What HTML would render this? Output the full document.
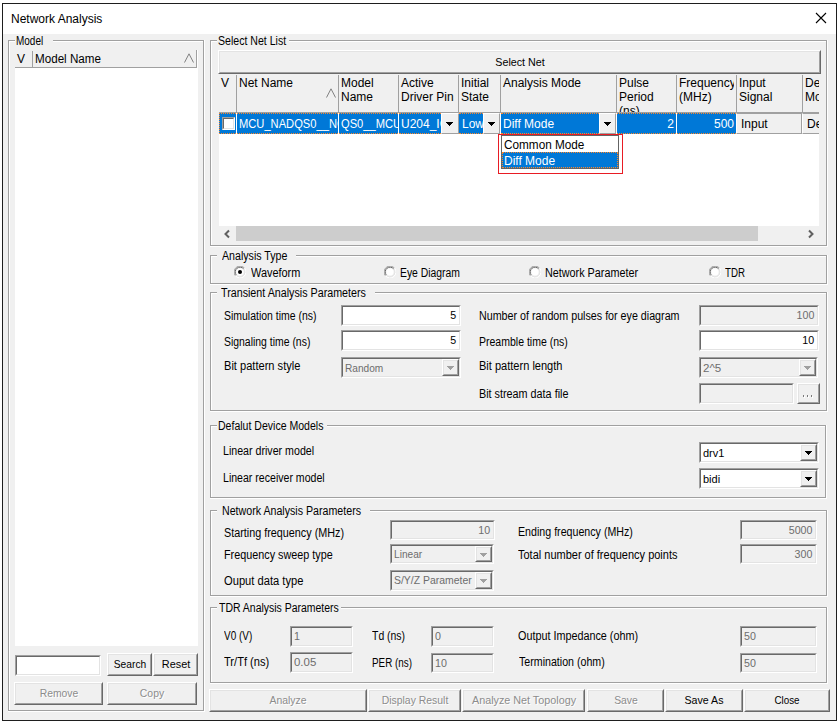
<!DOCTYPE html><html><head><meta charset="utf-8"><style>
html,body{margin:0;padding:0;background:#fff;}
body{width:839px;height:725px;position:relative;overflow:hidden;font-family:"Liberation Sans", sans-serif;}
.a{position:absolute;}
.t{position:absolute;white-space:nowrap;transform-origin:0 0;}
</style></head><body>
<div class="a" style="left:2px;top:3px;width:835px;height:718px;background:#f0f0f0;border:1px solid #1e1e1e;box-sizing:border-box;"></div>
<div class="a" style="left:3px;top:4px;width:833px;height:30px;background:#fff;"></div>
<div class="t" style="left:11px;top:13px;font-size:12px;line-height:12px;color:#000;transform:scaleX(1.0);">Network Analysis</div>
<svg class="a" style="left:815px;top:12px" width="12" height="12" viewBox="0 0 12 12"><path d="M1 1 L11 11 M11 1 L1 11" stroke="#000" stroke-width="1.1"/></svg>
<div class="a" style="left:8px;top:40px;width:196px;height:1px;background:#a0a0a0;"></div>
<div class="a" style="left:8px;top:40px;width:1px;height:671px;background:#a0a0a0;"></div>
<div class="a" style="left:203px;top:40px;width:1px;height:671px;background:#a0a0a0;"></div>
<div class="a" style="left:8px;top:710px;width:196px;height:1px;background:#a0a0a0;"></div>
<div class="a" style="left:9px;top:41px;width:194px;height:1px;background:#fff;"></div>
<div class="a" style="left:9px;top:41px;width:1px;height:669px;background:#fff;"></div>
<div class="a" style="left:204px;top:40px;width:1px;height:672px;background:#fff;"></div>
<div class="a" style="left:8px;top:711px;width:197px;height:1px;background:#fff;"></div>
<div class="a" style="left:15px;top:34px;width:38px;height:10px;background:#f0f0f0;"></div>
<div class="t" style="left:16px;top:35px;font-size:12px;line-height:12px;color:#000;transform:scaleX(0.83);">Model</div>
<div class="a" style="left:15px;top:50px;width:183px;height:596px;background:#fff;"></div>
<div class="a" style="left:15px;top:50px;width:182px;height:18px;background:#f0f0f0;"></div>
<div class="a" style="left:15px;top:67px;width:182px;height:1px;background:#a0a0a0;"></div>
<div class="a" style="left:32px;top:51px;width:1px;height:16px;background:#a0a0a0;"></div>
<div class="a" style="left:196px;top:50px;width:1px;height:17px;background:#a0a0a0;"></div>
<div class="t" style="left:17px;top:53px;font-size:12px;line-height:12px;color:#000;transform:scaleX(1.0);">V</div>
<div class="t" style="left:35px;top:53px;font-size:12px;line-height:12px;color:#000;transform:scaleX(0.97);">Model Name</div>
<svg class="a" style="left:184px;top:53px" width="10" height="10" viewBox="0 0 10 10"><path d="M0.5 9.5 L5 0.8 L9.5 9.5" stroke="#808080" fill="none"/></svg>
<div class="a" style="left:15px;top:655px;width:86px;height:21px;background:#fff;border-top:1px solid #a0a0a0;border-left:1px solid #a0a0a0;border-right:1px solid #fff;border-bottom:1px solid #fff;box-sizing:border-box;"></div>
<div class="a" style="left:16px;top:656px;width:84px;height:19px;border-top:1px solid #696969;border-left:1px solid #696969;border-right:1px solid #e3e3e3;border-bottom:1px solid #e3e3e3;box-sizing:border-box;"></div>
<div class="a" style="left:107px;top:653px;width:45px;height:23px;background:#f0f0f0;border-top:1px solid #fff;border-left:1px solid #fff;border-right:1px solid #696969;border-bottom:1px solid #696969;box-sizing:border-box;"></div>
<div class="a" style="left:108px;top:654px;width:43px;height:21px;border-top:1px solid #e3e3e3;border-left:1px solid #e3e3e3;border-right:1px solid #a0a0a0;border-bottom:1px solid #a0a0a0;box-sizing:border-box;"></div>
<div class="t" style="left:-170.5px;width:600px;text-align:center;top:659px;font-size:11px;line-height:11px;color:#000;transform:scaleX(0.93);transform-origin:50% 0;">Search</div>
<div class="a" style="left:153px;top:653px;width:45px;height:23px;background:#f0f0f0;border-top:1px solid #fff;border-left:1px solid #fff;border-right:1px solid #696969;border-bottom:1px solid #696969;box-sizing:border-box;"></div>
<div class="a" style="left:154px;top:654px;width:43px;height:21px;border-top:1px solid #e3e3e3;border-left:1px solid #e3e3e3;border-right:1px solid #a0a0a0;border-bottom:1px solid #a0a0a0;box-sizing:border-box;"></div>
<div class="t" style="left:-124.5px;width:600px;text-align:center;top:659px;font-size:11px;line-height:11px;color:#000;transform:scaleX(0.99);transform-origin:50% 0;">Reset</div>
<div class="a" style="left:14px;top:682px;width:89px;height:23px;background:#f0f0f0;border-top:1px solid #fff;border-left:1px solid #fff;border-right:1px solid #696969;border-bottom:1px solid #696969;box-sizing:border-box;"></div>
<div class="a" style="left:15px;top:683px;width:87px;height:21px;border-top:1px solid #e3e3e3;border-left:1px solid #e3e3e3;border-right:1px solid #a0a0a0;border-bottom:1px solid #a0a0a0;box-sizing:border-box;"></div>
<div class="t" style="left:-241.5px;width:600px;text-align:center;top:688px;font-size:11px;line-height:11px;color:#8c8c8c;transform:scaleX(0.94);transform-origin:50% 0;text-shadow:1px 1px 0 #fff;">Remove</div>
<div class="a" style="left:107px;top:682px;width:90px;height:23px;background:#f0f0f0;border-top:1px solid #fff;border-left:1px solid #fff;border-right:1px solid #696969;border-bottom:1px solid #696969;box-sizing:border-box;"></div>
<div class="a" style="left:108px;top:683px;width:88px;height:21px;border-top:1px solid #e3e3e3;border-left:1px solid #e3e3e3;border-right:1px solid #a0a0a0;border-bottom:1px solid #a0a0a0;box-sizing:border-box;"></div>
<div class="t" style="left:-148.0px;width:600px;text-align:center;top:688px;font-size:11px;line-height:11px;color:#8c8c8c;transform:scaleX(0.945);transform-origin:50% 0;text-shadow:1px 1px 0 #fff;">Copy</div>
<div class="a" style="left:210px;top:40px;width:617px;height:1px;background:#a0a0a0;"></div>
<div class="a" style="left:210px;top:40px;width:1px;height:206px;background:#a0a0a0;"></div>
<div class="a" style="left:826px;top:40px;width:1px;height:206px;background:#a0a0a0;"></div>
<div class="a" style="left:210px;top:245px;width:617px;height:1px;background:#a0a0a0;"></div>
<div class="a" style="left:211px;top:41px;width:615px;height:1px;background:#fff;"></div>
<div class="a" style="left:211px;top:41px;width:1px;height:204px;background:#fff;"></div>
<div class="a" style="left:827px;top:40px;width:1px;height:207px;background:#fff;"></div>
<div class="a" style="left:210px;top:246px;width:618px;height:1px;background:#fff;"></div>
<div class="a" style="left:217px;top:34px;width:72px;height:10px;background:#f0f0f0;"></div>
<div class="t" style="left:218px;top:35px;font-size:12px;line-height:12px;color:#000;transform:scaleX(0.881);">Select Net List</div>
<div class="a" style="left:219px;top:51px;width:600px;height:175px;background:#fff;"></div>
<div class="a" style="left:218px;top:50px;width:603px;height:24px;background:#f0f0f0;border-top:1px solid #fff;border-left:1px solid #fff;border-right:1px solid #696969;border-bottom:1px solid #696969;box-sizing:border-box;"></div>
<div class="a" style="left:219px;top:51px;width:601px;height:22px;border-top:1px solid #e3e3e3;border-left:1px solid #e3e3e3;border-right:1px solid #a0a0a0;border-bottom:1px solid #a0a0a0;box-sizing:border-box;"></div>
<div class="t" style="left:219.5px;width:600px;text-align:center;top:57px;font-size:11px;line-height:11px;color:#000;transform:scaleX(0.975);transform-origin:50% 0;">Select Net</div>
<div class="a" style="left:219px;top:74px;width:600px;height:39px;background:#f0f0f0;"></div>
<div class="a" style="left:219px;top:112px;width:600px;height:1px;background:#a0a0a0;"></div>
<div class="a" style="left:236px;top:75px;width:1px;height:37px;background:#a0a0a0;"></div>
<div class="a" style="left:338px;top:75px;width:1px;height:37px;background:#a0a0a0;"></div>
<div class="a" style="left:398px;top:75px;width:1px;height:37px;background:#a0a0a0;"></div>
<div class="a" style="left:458px;top:75px;width:1px;height:37px;background:#a0a0a0;"></div>
<div class="a" style="left:500px;top:75px;width:1px;height:37px;background:#a0a0a0;"></div>
<div class="a" style="left:616px;top:75px;width:1px;height:37px;background:#a0a0a0;"></div>
<div class="a" style="left:676px;top:75px;width:1px;height:37px;background:#a0a0a0;"></div>
<div class="a" style="left:736px;top:75px;width:1px;height:37px;background:#a0a0a0;"></div>
<div class="a" style="left:802px;top:75px;width:1px;height:37px;background:#a0a0a0;"></div>
<div class="a" style="left:220px;top:74px;width:14px;height:38px;overflow:hidden">
<div class="t" style="left:1px;top:3px;font-size:12px;line-height:12px;">V</div>
</div>
<div class="a" style="left:237px;top:74px;width:99px;height:38px;overflow:hidden">
<div class="t" style="left:2px;top:3px;font-size:12px;line-height:12px;">Net Name</div>
</div>
<div class="a" style="left:339px;top:74px;width:57px;height:38px;overflow:hidden">
<div class="t" style="left:2px;top:3px;font-size:12px;line-height:12px;">Model</div>
<div class="t" style="left:2px;top:17px;font-size:12px;line-height:12px;">Name</div>
</div>
<div class="a" style="left:399px;top:74px;width:57px;height:38px;overflow:hidden">
<div class="t" style="left:2px;top:3px;font-size:12px;line-height:12px;">Active</div>
<div class="t" style="left:2px;top:17px;font-size:12px;line-height:12px;">Driver Pin</div>
</div>
<div class="a" style="left:459px;top:74px;width:39px;height:38px;overflow:hidden">
<div class="t" style="left:2px;top:3px;font-size:12px;line-height:12px;">Initial</div>
<div class="t" style="left:2px;top:17px;font-size:12px;line-height:12px;">State</div>
</div>
<div class="a" style="left:501px;top:74px;width:113px;height:38px;overflow:hidden">
<div class="t" style="left:2px;top:3px;font-size:12px;line-height:12px;">Analysis Mode</div>
</div>
<div class="a" style="left:617px;top:74px;width:57px;height:38px;overflow:hidden">
<div class="t" style="left:2px;top:3px;font-size:12px;line-height:12px;">Pulse</div>
<div class="t" style="left:2px;top:17px;font-size:12px;line-height:12px;">Period</div>
<div class="t" style="left:2px;top:31px;font-size:12px;line-height:12px;">(ns)</div>
</div>
<div class="a" style="left:677px;top:74px;width:57px;height:38px;overflow:hidden">
<div class="t" style="left:2px;top:3px;font-size:12px;line-height:12px;">Frequency</div>
<div class="t" style="left:2px;top:17px;font-size:12px;line-height:12px;">(MHz)</div>
</div>
<div class="a" style="left:737px;top:74px;width:63px;height:38px;overflow:hidden">
<div class="t" style="left:2px;top:3px;font-size:12px;line-height:12px;">Input</div>
<div class="t" style="left:2px;top:17px;font-size:12px;line-height:12px;">Signal</div>
</div>
<div class="a" style="left:803px;top:74px;width:16px;height:38px;overflow:hidden">
<div class="t" style="left:2px;top:3px;font-size:12px;line-height:12px;">De</div>
<div class="t" style="left:2px;top:17px;font-size:12px;line-height:12px;">Mo</div>
</div>
<svg class="a" style="left:326px;top:88px" width="10" height="10" viewBox="0 0 10 10"><path d="M0.5 9.5 L5 0.8 L9.5 9.5" stroke="#808080" fill="none"/></svg>
<div class="a" style="left:219px;top:113px;width:600px;height:21px;background:#fff;"></div>
<div class="a" style="left:219px;top:113px;width:17px;height:21px;background:#0078d7;border-top:1px dotted #ff8728;border-bottom:1px dotted #ff8728;box-sizing:border-box;"></div>
<div class="a" style="left:219px;top:113px;width:1px;height:21px;border-left:1px dotted #ff8728;"></div>
<div class="a" style="left:222px;top:117px;width:13px;height:13px;background:#fff;border-top:1px solid #a0a0a0;border-left:1px solid #a0a0a0;border-right:1px solid #fff;border-bottom:1px solid #fff;box-sizing:border-box;"></div>
<div class="a" style="left:223px;top:118px;width:11px;height:11px;border-top:1px solid #696969;border-left:1px solid #696969;border-right:1px solid #e3e3e3;border-bottom:1px solid #e3e3e3;box-sizing:border-box;"></div>
<div class="a" style="left:237px;top:113px;width:101px;height:21px;background:#0078d7;border-top:1px dotted #ff8728;border-bottom:1px dotted #ff8728;box-sizing:border-box;"></div>
<div class="a" style="left:237px;top:113px;width:101px;height:21px;overflow:hidden">
<div class="t" style="left:2px;top:5px;font-size:12px;line-height:12px;color:#fff;transform:scaleX(0.93)">MCU_NADQS0__NCU</div>
</div>
<div class="a" style="left:339px;top:113px;width:59px;height:21px;background:#0078d7;border-top:1px dotted #ff8728;border-bottom:1px dotted #ff8728;box-sizing:border-box;"></div>
<div class="a" style="left:339px;top:113px;width:59px;height:21px;overflow:hidden">
<div class="t" style="left:2px;top:5px;font-size:12px;line-height:12px;color:#fff;transform:scaleX(0.93)">QS0__MCU_NA</div>
</div>
<div class="a" style="left:399px;top:113px;width:42px;height:21px;background:#0078d7;border-top:1px dotted #ff8728;border-bottom:1px dotted #ff8728;box-sizing:border-box;"></div>
<div class="a" style="left:399px;top:113px;width:42px;height:21px;overflow:hidden">
<div class="t" style="left:2px;top:5px;font-size:12px;line-height:12px;color:#fff;transform:scaleX(1.0)">U204_IO</div>
</div>
<div class="a" style="left:459px;top:113px;width:24px;height:21px;background:#0078d7;border-top:1px dotted #ff8728;border-bottom:1px dotted #ff8728;box-sizing:border-box;"></div>
<div class="a" style="left:459px;top:113px;width:24px;height:21px;overflow:hidden">
<div class="t" style="left:3px;top:5px;font-size:12px;line-height:12px;color:#fff;transform:scaleX(1.0)">Low</div>
</div>
<div class="a" style="left:501px;top:113px;width:98px;height:21px;background:#0078d7;border-top:1px dotted #ff8728;border-bottom:1px dotted #ff8728;box-sizing:border-box;"></div>
<div class="a" style="left:501px;top:113px;width:98px;height:21px;overflow:hidden">
<div class="t" style="left:2px;top:5px;font-size:12px;line-height:12px;color:#fff;transform:scaleX(1.0)">Diff Mode</div>
</div>
<div class="a" style="left:617px;top:113px;width:59px;height:21px;background:#0078d7;border-top:1px dotted #ff8728;border-bottom:1px dotted #ff8728;box-sizing:border-box;"></div>
<div class="a" style="left:617px;top:113px;width:59px;height:21px;overflow:hidden">
<div class="t" style="right:2px;top:5px;font-size:12px;line-height:12px;color:#fff">2</div>
</div>
<div class="a" style="left:677px;top:113px;width:59px;height:21px;background:#0078d7;border-top:1px dotted #ff8728;border-bottom:1px dotted #ff8728;box-sizing:border-box;"></div>
<div class="a" style="left:677px;top:113px;width:59px;height:21px;overflow:hidden">
<div class="t" style="right:2px;top:5px;font-size:12px;line-height:12px;color:#fff">500</div>
</div>
<div class="a" style="left:441px;top:113px;width:18px;height:21px;background:#f0f0f0;border-top:1px solid #fff;border-left:1px solid #fff;border-right:1px solid #a0a0a0;border-bottom:1px solid #a0a0a0;box-sizing:border-box;"></div>
<div class="a" style="left:446px;top:122px;width:7px;height:1px;background:#000;"></div>
<div class="a" style="left:447px;top:123px;width:5px;height:1px;background:#000;"></div>
<div class="a" style="left:448px;top:124px;width:3px;height:1px;background:#000;"></div>
<div class="a" style="left:449px;top:125px;width:1px;height:1px;background:#000;"></div>
<div class="a" style="left:483px;top:113px;width:17px;height:21px;background:#f0f0f0;border-top:1px solid #fff;border-left:1px solid #fff;border-right:1px solid #a0a0a0;border-bottom:1px solid #a0a0a0;box-sizing:border-box;"></div>
<div class="a" style="left:488px;top:122px;width:7px;height:1px;background:#000;"></div>
<div class="a" style="left:489px;top:123px;width:5px;height:1px;background:#000;"></div>
<div class="a" style="left:490px;top:124px;width:3px;height:1px;background:#000;"></div>
<div class="a" style="left:491px;top:125px;width:1px;height:1px;background:#000;"></div>
<div class="a" style="left:599px;top:113px;width:17px;height:21px;background:#f0f0f0;border-top:1px solid #fff;border-left:1px solid #fff;border-right:1px solid #a0a0a0;border-bottom:1px solid #a0a0a0;box-sizing:border-box;"></div>
<div class="a" style="left:604px;top:122px;width:7px;height:1px;background:#000;"></div>
<div class="a" style="left:605px;top:123px;width:5px;height:1px;background:#000;"></div>
<div class="a" style="left:606px;top:124px;width:3px;height:1px;background:#000;"></div>
<div class="a" style="left:607px;top:125px;width:1px;height:1px;background:#000;"></div>
<div class="a" style="left:736px;top:113px;width:66px;height:21px;background:#f0f0f0;border-top:1px solid #a0a0a0;border-left:1px solid #fff;border-right:1px solid #a0a0a0;border-bottom:1px solid #a0a0a0;box-sizing:border-box;"></div>
<div class="t" style="left:741px;top:118px;font-size:12px;line-height:12px;color:#000;transform:scaleX(1.0);">Input</div>
<div class="a" style="left:802px;top:113px;width:17px;height:21px;background:#f0f0f0;border-top:1px solid #a0a0a0;border-left:1px solid #fff;border-bottom:1px solid #a0a0a0;box-sizing:border-box;"></div>
<div class="a" style="left:802px;top:113px;width:17px;height:21px;overflow:hidden"><div class="t" style="left:5px;top:5px;font-size:12px;line-height:12px;">De</div></div>
<div class="a" style="left:498px;top:134px;width:125px;height:40px;border:1px solid #e81c24;box-sizing:border-box;"></div>
<div class="a" style="left:501px;top:135px;width:118px;height:34px;background:#fff;border:1px solid #646464;box-sizing:border-box;"></div>
<div class="a" style="left:502px;top:152px;width:116px;height:16px;background:#0078d7;border:1px dotted #ff8728;box-sizing:border-box;"></div>
<div class="t" style="left:504px;top:139px;font-size:12px;line-height:12px;color:#000;transform:scaleX(0.98);">Common Mode</div>
<div class="t" style="left:504px;top:155px;font-size:12px;line-height:12px;color:#fff;transform:scaleX(1.0);">Diff Mode</div>
<div class="a" style="left:219px;top:226px;width:600px;height:15px;background:#f0f0f0;"></div>
<div class="a" style="left:236px;top:226px;width:522px;height:15px;background:#cdcdcd;"></div>
<svg class="a" style="left:223px;top:229px" width="9" height="10" viewBox="0 0 9 10"><path d="M6 1.5 L2.5 5 L6 8.5" stroke="#606060" stroke-width="2" fill="none"/></svg>
<svg class="a" style="left:806px;top:229px" width="9" height="10" viewBox="0 0 9 10"><path d="M3 1.5 L6.5 5 L3 8.5" stroke="#606060" stroke-width="2" fill="none"/></svg>
<div class="a" style="left:210px;top:255px;width:617px;height:1px;background:#a0a0a0;"></div>
<div class="a" style="left:210px;top:255px;width:1px;height:29px;background:#a0a0a0;"></div>
<div class="a" style="left:826px;top:255px;width:1px;height:29px;background:#a0a0a0;"></div>
<div class="a" style="left:210px;top:283px;width:617px;height:1px;background:#a0a0a0;"></div>
<div class="a" style="left:211px;top:256px;width:615px;height:1px;background:#fff;"></div>
<div class="a" style="left:211px;top:256px;width:1px;height:27px;background:#fff;"></div>
<div class="a" style="left:827px;top:255px;width:1px;height:30px;background:#fff;"></div>
<div class="a" style="left:210px;top:284px;width:618px;height:1px;background:#fff;"></div>
<div class="a" style="left:217px;top:249px;width:79px;height:10px;background:#f0f0f0;"></div>
<div class="t" style="left:222px;top:250px;font-size:12px;line-height:12px;color:#000;transform:scaleX(0.886);">Analysis Type</div>
<svg class="a" style="left:234px;top:266px" width="12" height="12" viewBox="0 0 12 12">
<path d="M10.5 2.1 A5.5 5.5 0 0 0 1.5 9.9" stroke="#a0a0a0" fill="none"/>
<path d="M9.7 2.9 A4.5 4.5 0 0 0 2.3 9.1" stroke="#696969" fill="none"/>
<path d="M1.5 9.9 A5.5 5.5 0 0 0 10.5 2.1" stroke="#fff" fill="none"/>
<path d="M2.3 9.1 A4.5 4.5 0 0 0 9.7 2.9" stroke="#e3e3e3" fill="none"/>
<circle cx="6" cy="6" r="3.5" fill="#fff"/>
<circle cx="6" cy="6" r="2" fill="#000"/>
</svg>
<div class="t" style="left:251px;top:267px;font-size:12px;line-height:12px;color:#000;transform:scaleX(0.91);">Waveform</div>
<svg class="a" style="left:384px;top:266px" width="12" height="12" viewBox="0 0 12 12">
<path d="M10.5 2.1 A5.5 5.5 0 0 0 1.5 9.9" stroke="#a0a0a0" fill="none"/>
<path d="M9.7 2.9 A4.5 4.5 0 0 0 2.3 9.1" stroke="#696969" fill="none"/>
<path d="M1.5 9.9 A5.5 5.5 0 0 0 10.5 2.1" stroke="#fff" fill="none"/>
<path d="M2.3 9.1 A4.5 4.5 0 0 0 9.7 2.9" stroke="#e3e3e3" fill="none"/>
<circle cx="6" cy="6" r="3.5" fill="#fff"/>

</svg>
<div class="t" style="left:400px;top:267px;font-size:12px;line-height:12px;color:#000;transform:scaleX(0.865);">Eye Diagram</div>
<svg class="a" style="left:529px;top:266px" width="12" height="12" viewBox="0 0 12 12">
<path d="M10.5 2.1 A5.5 5.5 0 0 0 1.5 9.9" stroke="#a0a0a0" fill="none"/>
<path d="M9.7 2.9 A4.5 4.5 0 0 0 2.3 9.1" stroke="#696969" fill="none"/>
<path d="M1.5 9.9 A5.5 5.5 0 0 0 10.5 2.1" stroke="#fff" fill="none"/>
<path d="M2.3 9.1 A4.5 4.5 0 0 0 9.7 2.9" stroke="#e3e3e3" fill="none"/>
<circle cx="6" cy="6" r="3.5" fill="#fff"/>

</svg>
<div class="t" style="left:545px;top:267px;font-size:12px;line-height:12px;color:#000;transform:scaleX(0.9);">Network Parameter</div>
<svg class="a" style="left:709px;top:266px" width="12" height="12" viewBox="0 0 12 12">
<path d="M10.5 2.1 A5.5 5.5 0 0 0 1.5 9.9" stroke="#a0a0a0" fill="none"/>
<path d="M9.7 2.9 A4.5 4.5 0 0 0 2.3 9.1" stroke="#696969" fill="none"/>
<path d="M1.5 9.9 A5.5 5.5 0 0 0 10.5 2.1" stroke="#fff" fill="none"/>
<path d="M2.3 9.1 A4.5 4.5 0 0 0 9.7 2.9" stroke="#e3e3e3" fill="none"/>
<circle cx="6" cy="6" r="3.5" fill="#fff"/>

</svg>
<div class="t" style="left:725px;top:267px;font-size:12px;line-height:12px;color:#000;transform:scaleX(0.81);">TDR</div>
<div class="a" style="left:210px;top:292px;width:617px;height:1px;background:#a0a0a0;"></div>
<div class="a" style="left:210px;top:292px;width:1px;height:119px;background:#a0a0a0;"></div>
<div class="a" style="left:826px;top:292px;width:1px;height:119px;background:#a0a0a0;"></div>
<div class="a" style="left:210px;top:410px;width:617px;height:1px;background:#a0a0a0;"></div>
<div class="a" style="left:211px;top:293px;width:615px;height:1px;background:#fff;"></div>
<div class="a" style="left:211px;top:293px;width:1px;height:117px;background:#fff;"></div>
<div class="a" style="left:827px;top:292px;width:1px;height:120px;background:#fff;"></div>
<div class="a" style="left:210px;top:411px;width:618px;height:1px;background:#fff;"></div>
<div class="a" style="left:217px;top:286px;width:158px;height:10px;background:#f0f0f0;"></div>
<div class="t" style="left:221px;top:287px;font-size:12px;line-height:12px;color:#000;transform:scaleX(0.893);">Transient Analysis Parameters</div>
<div class="t" style="left:224px;top:310px;font-size:12px;line-height:12px;color:#000;transform:scaleX(0.872);">Simulation time (ns)</div>
<div class="t" style="left:224px;top:336px;font-size:12px;line-height:12px;color:#000;transform:scaleX(0.869);">Signaling time (ns)</div>
<div class="t" style="left:224px;top:360px;font-size:12px;line-height:12px;color:#000;transform:scaleX(0.924);">Bit pattern style</div>
<div class="a" style="left:341px;top:305px;width:120px;height:21px;background:#fff;border-top:1px solid #a0a0a0;border-left:1px solid #a0a0a0;border-right:1px solid #fff;border-bottom:1px solid #fff;box-sizing:border-box;"></div>
<div class="a" style="left:342px;top:306px;width:118px;height:19px;border-top:1px solid #696969;border-left:1px solid #696969;border-right:1px solid #e3e3e3;border-bottom:1px solid #e3e3e3;box-sizing:border-box;"></div>
<div class="t" style="right:382.5px;top:310px;font-size:11px;line-height:11px;color:#000;transform:scaleX(0.97);transform-origin:100% 0;">5</div>
<div class="a" style="left:341px;top:330px;width:120px;height:21px;background:#fff;border-top:1px solid #a0a0a0;border-left:1px solid #a0a0a0;border-right:1px solid #fff;border-bottom:1px solid #fff;box-sizing:border-box;"></div>
<div class="a" style="left:342px;top:331px;width:118px;height:19px;border-top:1px solid #696969;border-left:1px solid #696969;border-right:1px solid #e3e3e3;border-bottom:1px solid #e3e3e3;box-sizing:border-box;"></div>
<div class="t" style="right:382.5px;top:335px;font-size:11px;line-height:11px;color:#000;transform:scaleX(0.97);transform-origin:100% 0;">5</div>
<div class="a" style="left:341px;top:357px;width:120px;height:21px;background:#f0f0f0;border-top:1px solid #a0a0a0;border-left:1px solid #a0a0a0;border-right:1px solid #fff;border-bottom:1px solid #fff;box-sizing:border-box;"></div>
<div class="a" style="left:342px;top:358px;width:118px;height:19px;border-top:1px solid #696969;border-left:1px solid #696969;border-right:1px solid #e3e3e3;border-bottom:1px solid #e3e3e3;box-sizing:border-box;"></div>
<div class="a" style="left:442px;top:359px;width:17px;height:17px;background:#f0f0f0;border-top:1px solid #fff;border-left:1px solid #fff;border-right:1px solid #696969;border-bottom:1px solid #696969;box-sizing:border-box;"></div>
<div class="a" style="left:443px;top:360px;width:15px;height:15px;border-top:1px solid #e3e3e3;border-left:1px solid #e3e3e3;border-right:1px solid #a0a0a0;border-bottom:1px solid #a0a0a0;box-sizing:border-box;"></div>
<div class="a" style="left:447px;top:366px;width:7px;height:1px;background:#a0a0a0;"></div>
<div class="a" style="left:448px;top:367px;width:5px;height:1px;background:#a0a0a0;"></div>
<div class="a" style="left:449px;top:368px;width:3px;height:1px;background:#a0a0a0;"></div>
<div class="a" style="left:450px;top:369px;width:1px;height:1px;background:#a0a0a0;"></div>
<div class="t" style="left:345px;top:363px;font-size:11px;line-height:11px;color:#6d6d6d;transform:scaleX(0.92);">Random</div>
<div class="t" style="left:479px;top:310px;font-size:12px;line-height:12px;color:#000;transform:scaleX(0.892);">Number of random pulses for eye diagram</div>
<div class="t" style="left:479px;top:336px;font-size:12px;line-height:12px;color:#000;transform:scaleX(0.876);">Preamble time (ns)</div>
<div class="t" style="left:479px;top:360px;font-size:12px;line-height:12px;color:#000;transform:scaleX(0.92);">Bit pattern length</div>
<div class="t" style="left:479px;top:388px;font-size:12px;line-height:12px;color:#000;transform:scaleX(0.9);">Bit stream data file</div>
<div class="a" style="left:699px;top:305px;width:120px;height:21px;background:#f0f0f0;border-top:1px solid #a0a0a0;border-left:1px solid #a0a0a0;border-right:1px solid #fff;border-bottom:1px solid #fff;box-sizing:border-box;"></div>
<div class="a" style="left:700px;top:306px;width:118px;height:19px;border-top:1px solid #696969;border-left:1px solid #696969;border-right:1px solid #e3e3e3;border-bottom:1px solid #e3e3e3;box-sizing:border-box;"></div>
<div class="t" style="right:24.5px;top:310px;font-size:11px;line-height:11px;color:#6d6d6d;transform:scaleX(0.97);transform-origin:100% 0;">100</div>
<div class="a" style="left:699px;top:330px;width:120px;height:21px;background:#fff;border-top:1px solid #a0a0a0;border-left:1px solid #a0a0a0;border-right:1px solid #fff;border-bottom:1px solid #fff;box-sizing:border-box;"></div>
<div class="a" style="left:700px;top:331px;width:118px;height:19px;border-top:1px solid #696969;border-left:1px solid #696969;border-right:1px solid #e3e3e3;border-bottom:1px solid #e3e3e3;box-sizing:border-box;"></div>
<div class="t" style="right:24.5px;top:335px;font-size:11px;line-height:11px;color:#000;transform:scaleX(0.97);transform-origin:100% 0;">10</div>
<div class="a" style="left:699px;top:357px;width:119px;height:21px;background:#f0f0f0;border-top:1px solid #a0a0a0;border-left:1px solid #a0a0a0;border-right:1px solid #fff;border-bottom:1px solid #fff;box-sizing:border-box;"></div>
<div class="a" style="left:700px;top:358px;width:117px;height:19px;border-top:1px solid #696969;border-left:1px solid #696969;border-right:1px solid #e3e3e3;border-bottom:1px solid #e3e3e3;box-sizing:border-box;"></div>
<div class="a" style="left:799px;top:359px;width:17px;height:17px;background:#f0f0f0;border-top:1px solid #fff;border-left:1px solid #fff;border-right:1px solid #696969;border-bottom:1px solid #696969;box-sizing:border-box;"></div>
<div class="a" style="left:800px;top:360px;width:15px;height:15px;border-top:1px solid #e3e3e3;border-left:1px solid #e3e3e3;border-right:1px solid #a0a0a0;border-bottom:1px solid #a0a0a0;box-sizing:border-box;"></div>
<div class="a" style="left:804px;top:366px;width:7px;height:1px;background:#a0a0a0;"></div>
<div class="a" style="left:805px;top:367px;width:5px;height:1px;background:#a0a0a0;"></div>
<div class="a" style="left:806px;top:368px;width:3px;height:1px;background:#a0a0a0;"></div>
<div class="a" style="left:807px;top:369px;width:1px;height:1px;background:#a0a0a0;"></div>
<div class="t" style="left:703px;top:363px;font-size:11px;line-height:11px;color:#6d6d6d;transform:scaleX(1.05);">2^5</div>
<div class="a" style="left:699px;top:383px;width:95px;height:21px;background:#f0f0f0;border-top:1px solid #a0a0a0;border-left:1px solid #a0a0a0;border-right:1px solid #fff;border-bottom:1px solid #fff;box-sizing:border-box;"></div>
<div class="a" style="left:700px;top:384px;width:93px;height:19px;border-top:1px solid #696969;border-left:1px solid #696969;border-right:1px solid #e3e3e3;border-bottom:1px solid #e3e3e3;box-sizing:border-box;"></div>
<div class="a" style="left:797px;top:383px;width:23px;height:21px;background:#f0f0f0;border-top:1px solid #fff;border-left:1px solid #fff;border-right:1px solid #696969;border-bottom:1px solid #696969;box-sizing:border-box;"></div>
<div class="a" style="left:798px;top:384px;width:21px;height:19px;border-top:1px solid #e3e3e3;border-left:1px solid #e3e3e3;border-right:1px solid #a0a0a0;border-bottom:1px solid #a0a0a0;box-sizing:border-box;"></div>
<div class="a" style="left:804px;top:396px;width:1px;height:2px;background:#fff;"></div>
<div class="a" style="left:803px;top:395px;width:1px;height:2px;background:#7a7a7a;"></div>
<div class="a" style="left:808px;top:396px;width:1px;height:2px;background:#fff;"></div>
<div class="a" style="left:807px;top:395px;width:1px;height:2px;background:#7a7a7a;"></div>
<div class="a" style="left:812px;top:396px;width:1px;height:2px;background:#fff;"></div>
<div class="a" style="left:811px;top:395px;width:1px;height:2px;background:#7a7a7a;"></div>
<div class="a" style="left:210px;top:425px;width:616px;height:1px;background:#a0a0a0;"></div>
<div class="a" style="left:210px;top:425px;width:1px;height:73px;background:#a0a0a0;"></div>
<div class="a" style="left:825px;top:425px;width:1px;height:73px;background:#a0a0a0;"></div>
<div class="a" style="left:210px;top:497px;width:616px;height:1px;background:#a0a0a0;"></div>
<div class="a" style="left:211px;top:426px;width:614px;height:1px;background:#fff;"></div>
<div class="a" style="left:211px;top:426px;width:1px;height:71px;background:#fff;"></div>
<div class="a" style="left:826px;top:425px;width:1px;height:74px;background:#fff;"></div>
<div class="a" style="left:210px;top:498px;width:617px;height:1px;background:#fff;"></div>
<div class="a" style="left:217px;top:419px;width:110px;height:10px;background:#f0f0f0;"></div>
<div class="t" style="left:218px;top:420px;font-size:12px;line-height:12px;color:#000;transform:scaleX(0.878);">Defalut Device Models</div>
<div class="t" style="left:223px;top:445px;font-size:12px;line-height:12px;color:#000;transform:scaleX(0.887);">Linear driver model</div>
<div class="t" style="left:223px;top:472px;font-size:12px;line-height:12px;color:#000;transform:scaleX(0.881);">Linear receiver model</div>
<div class="a" style="left:699px;top:442px;width:120px;height:21px;background:#fff;border-top:1px solid #a0a0a0;border-left:1px solid #a0a0a0;border-right:1px solid #fff;border-bottom:1px solid #fff;box-sizing:border-box;"></div>
<div class="a" style="left:700px;top:443px;width:118px;height:19px;border-top:1px solid #696969;border-left:1px solid #696969;border-right:1px solid #e3e3e3;border-bottom:1px solid #e3e3e3;box-sizing:border-box;"></div>
<div class="a" style="left:800px;top:444px;width:17px;height:17px;background:#f0f0f0;border-top:1px solid #fff;border-left:1px solid #fff;border-right:1px solid #696969;border-bottom:1px solid #696969;box-sizing:border-box;"></div>
<div class="a" style="left:801px;top:445px;width:15px;height:15px;border-top:1px solid #e3e3e3;border-left:1px solid #e3e3e3;border-right:1px solid #a0a0a0;border-bottom:1px solid #a0a0a0;box-sizing:border-box;"></div>
<div class="a" style="left:805px;top:451px;width:7px;height:1px;background:#000;"></div>
<div class="a" style="left:806px;top:452px;width:5px;height:1px;background:#000;"></div>
<div class="a" style="left:807px;top:453px;width:3px;height:1px;background:#000;"></div>
<div class="a" style="left:808px;top:454px;width:1px;height:1px;background:#000;"></div>
<div class="t" style="left:703px;top:448px;font-size:11px;line-height:11px;color:#000;transform:scaleX(1.0);">drv1</div>
<div class="a" style="left:699px;top:468px;width:120px;height:21px;background:#fff;border-top:1px solid #a0a0a0;border-left:1px solid #a0a0a0;border-right:1px solid #fff;border-bottom:1px solid #fff;box-sizing:border-box;"></div>
<div class="a" style="left:700px;top:469px;width:118px;height:19px;border-top:1px solid #696969;border-left:1px solid #696969;border-right:1px solid #e3e3e3;border-bottom:1px solid #e3e3e3;box-sizing:border-box;"></div>
<div class="a" style="left:800px;top:470px;width:17px;height:17px;background:#f0f0f0;border-top:1px solid #fff;border-left:1px solid #fff;border-right:1px solid #696969;border-bottom:1px solid #696969;box-sizing:border-box;"></div>
<div class="a" style="left:801px;top:471px;width:15px;height:15px;border-top:1px solid #e3e3e3;border-left:1px solid #e3e3e3;border-right:1px solid #a0a0a0;border-bottom:1px solid #a0a0a0;box-sizing:border-box;"></div>
<div class="a" style="left:805px;top:477px;width:7px;height:1px;background:#000;"></div>
<div class="a" style="left:806px;top:478px;width:5px;height:1px;background:#000;"></div>
<div class="a" style="left:807px;top:479px;width:3px;height:1px;background:#000;"></div>
<div class="a" style="left:808px;top:480px;width:1px;height:1px;background:#000;"></div>
<div class="t" style="left:703px;top:474px;font-size:11px;line-height:11px;color:#000;transform:scaleX(1.0);">bidi</div>
<div class="a" style="left:210px;top:510px;width:617px;height:1px;background:#a0a0a0;"></div>
<div class="a" style="left:210px;top:510px;width:1px;height:86px;background:#a0a0a0;"></div>
<div class="a" style="left:826px;top:510px;width:1px;height:86px;background:#a0a0a0;"></div>
<div class="a" style="left:210px;top:595px;width:617px;height:1px;background:#a0a0a0;"></div>
<div class="a" style="left:211px;top:511px;width:615px;height:1px;background:#fff;"></div>
<div class="a" style="left:211px;top:511px;width:1px;height:84px;background:#fff;"></div>
<div class="a" style="left:827px;top:510px;width:1px;height:87px;background:#fff;"></div>
<div class="a" style="left:210px;top:596px;width:618px;height:1px;background:#fff;"></div>
<div class="a" style="left:217px;top:504px;width:153px;height:10px;background:#f0f0f0;"></div>
<div class="t" style="left:222px;top:505px;font-size:12px;line-height:12px;color:#000;transform:scaleX(0.887);">Network Analysis Parameters</div>
<div class="t" style="left:224px;top:527px;font-size:12px;line-height:12px;color:#000;transform:scaleX(0.9);">Starting frequency (MHz)</div>
<div class="t" style="left:224px;top:549px;font-size:12px;line-height:12px;color:#000;transform:scaleX(0.9);">Frequency sweep type</div>
<div class="t" style="left:224px;top:575px;font-size:12px;line-height:12px;color:#000;transform:scaleX(0.93);">Ouput data type</div>
<div class="a" style="left:390px;top:520px;width:105px;height:20px;background:#f0f0f0;border-top:1px solid #a0a0a0;border-left:1px solid #a0a0a0;border-right:1px solid #fff;border-bottom:1px solid #fff;box-sizing:border-box;"></div>
<div class="a" style="left:391px;top:521px;width:103px;height:18px;border-top:1px solid #696969;border-left:1px solid #696969;border-right:1px solid #e3e3e3;border-bottom:1px solid #e3e3e3;box-sizing:border-box;"></div>
<div class="t" style="right:348.5px;top:525px;font-size:11px;line-height:11px;color:#6d6d6d;transform:scaleX(0.97);transform-origin:100% 0;">10</div>
<div class="a" style="left:390px;top:544px;width:104px;height:20px;background:#f0f0f0;border-top:1px solid #a0a0a0;border-left:1px solid #a0a0a0;border-right:1px solid #fff;border-bottom:1px solid #fff;box-sizing:border-box;"></div>
<div class="a" style="left:391px;top:545px;width:102px;height:18px;border-top:1px solid #696969;border-left:1px solid #696969;border-right:1px solid #e3e3e3;border-bottom:1px solid #e3e3e3;box-sizing:border-box;"></div>
<div class="a" style="left:475px;top:546px;width:17px;height:16px;background:#f0f0f0;border-top:1px solid #fff;border-left:1px solid #fff;border-right:1px solid #696969;border-bottom:1px solid #696969;box-sizing:border-box;"></div>
<div class="a" style="left:476px;top:547px;width:15px;height:14px;border-top:1px solid #e3e3e3;border-left:1px solid #e3e3e3;border-right:1px solid #a0a0a0;border-bottom:1px solid #a0a0a0;box-sizing:border-box;"></div>
<div class="a" style="left:480px;top:553px;width:7px;height:1px;background:#a0a0a0;"></div>
<div class="a" style="left:481px;top:554px;width:5px;height:1px;background:#a0a0a0;"></div>
<div class="a" style="left:482px;top:555px;width:3px;height:1px;background:#a0a0a0;"></div>
<div class="a" style="left:483px;top:556px;width:1px;height:1px;background:#a0a0a0;"></div>
<div class="t" style="left:394px;top:549px;font-size:11px;line-height:11px;color:#6d6d6d;transform:scaleX(0.92);">Linear</div>
<div class="a" style="left:390px;top:570px;width:104px;height:21px;background:#f0f0f0;border-top:1px solid #a0a0a0;border-left:1px solid #a0a0a0;border-right:1px solid #fff;border-bottom:1px solid #fff;box-sizing:border-box;"></div>
<div class="a" style="left:391px;top:571px;width:102px;height:19px;border-top:1px solid #696969;border-left:1px solid #696969;border-right:1px solid #e3e3e3;border-bottom:1px solid #e3e3e3;box-sizing:border-box;"></div>
<div class="a" style="left:475px;top:572px;width:17px;height:17px;background:#f0f0f0;border-top:1px solid #fff;border-left:1px solid #fff;border-right:1px solid #696969;border-bottom:1px solid #696969;box-sizing:border-box;"></div>
<div class="a" style="left:476px;top:573px;width:15px;height:15px;border-top:1px solid #e3e3e3;border-left:1px solid #e3e3e3;border-right:1px solid #a0a0a0;border-bottom:1px solid #a0a0a0;box-sizing:border-box;"></div>
<div class="a" style="left:480px;top:579px;width:7px;height:1px;background:#a0a0a0;"></div>
<div class="a" style="left:481px;top:580px;width:5px;height:1px;background:#a0a0a0;"></div>
<div class="a" style="left:482px;top:581px;width:3px;height:1px;background:#a0a0a0;"></div>
<div class="a" style="left:483px;top:582px;width:1px;height:1px;background:#a0a0a0;"></div>
<div class="t" style="left:394px;top:575px;font-size:11px;line-height:11px;color:#6d6d6d;transform:scaleX(0.95);">S/Y/Z Parameter</div>
<div class="t" style="left:518px;top:526px;font-size:12px;line-height:12px;color:#000;transform:scaleX(0.888);">Ending frequency (MHz)</div>
<div class="t" style="left:518px;top:549px;font-size:12px;line-height:12px;color:#000;transform:scaleX(0.916);">Total number of frequency points</div>
<div class="a" style="left:740px;top:520px;width:77px;height:20px;background:#f0f0f0;border-top:1px solid #a0a0a0;border-left:1px solid #a0a0a0;border-right:1px solid #fff;border-bottom:1px solid #fff;box-sizing:border-box;"></div>
<div class="a" style="left:741px;top:521px;width:75px;height:18px;border-top:1px solid #696969;border-left:1px solid #696969;border-right:1px solid #e3e3e3;border-bottom:1px solid #e3e3e3;box-sizing:border-box;"></div>
<div class="t" style="right:26.5px;top:525px;font-size:11px;line-height:11px;color:#6d6d6d;transform:scaleX(0.97);transform-origin:100% 0;">5000</div>
<div class="a" style="left:740px;top:544px;width:77px;height:20px;background:#f0f0f0;border-top:1px solid #a0a0a0;border-left:1px solid #a0a0a0;border-right:1px solid #fff;border-bottom:1px solid #fff;box-sizing:border-box;"></div>
<div class="a" style="left:741px;top:545px;width:75px;height:18px;border-top:1px solid #696969;border-left:1px solid #696969;border-right:1px solid #e3e3e3;border-bottom:1px solid #e3e3e3;box-sizing:border-box;"></div>
<div class="t" style="right:26.5px;top:549px;font-size:11px;line-height:11px;color:#6d6d6d;transform:scaleX(0.97);transform-origin:100% 0;">300</div>
<div class="a" style="left:210px;top:607px;width:617px;height:1px;background:#a0a0a0;"></div>
<div class="a" style="left:210px;top:607px;width:1px;height:76px;background:#a0a0a0;"></div>
<div class="a" style="left:826px;top:607px;width:1px;height:76px;background:#a0a0a0;"></div>
<div class="a" style="left:210px;top:682px;width:617px;height:1px;background:#a0a0a0;"></div>
<div class="a" style="left:211px;top:608px;width:615px;height:1px;background:#fff;"></div>
<div class="a" style="left:211px;top:608px;width:1px;height:74px;background:#fff;"></div>
<div class="a" style="left:827px;top:607px;width:1px;height:77px;background:#fff;"></div>
<div class="a" style="left:210px;top:683px;width:618px;height:1px;background:#fff;"></div>
<div class="a" style="left:217px;top:601px;width:124px;height:10px;background:#f0f0f0;"></div>
<div class="t" style="left:219px;top:602px;font-size:12px;line-height:12px;color:#000;transform:scaleX(0.872);">TDR Analysis Parameters</div>
<div class="t" style="left:224px;top:630px;font-size:12px;line-height:12px;color:#000;transform:scaleX(0.83);">V0 (V)</div>
<div class="t" style="left:224px;top:656px;font-size:12px;line-height:12px;color:#000;transform:scaleX(0.925);">Tr/Tf (ns)</div>
<div class="a" style="left:290px;top:626px;width:63px;height:21px;background:#f0f0f0;border-top:1px solid #a0a0a0;border-left:1px solid #a0a0a0;border-right:1px solid #fff;border-bottom:1px solid #fff;box-sizing:border-box;"></div>
<div class="a" style="left:291px;top:627px;width:61px;height:19px;border-top:1px solid #696969;border-left:1px solid #696969;border-right:1px solid #e3e3e3;border-bottom:1px solid #e3e3e3;box-sizing:border-box;"></div>
<div class="t" style="left:294px;top:631px;font-size:11px;line-height:11px;color:#6d6d6d;transform:scaleX(0.97);">1</div>
<div class="a" style="left:290px;top:652px;width:63px;height:21px;background:#f0f0f0;border-top:1px solid #a0a0a0;border-left:1px solid #a0a0a0;border-right:1px solid #fff;border-bottom:1px solid #fff;box-sizing:border-box;"></div>
<div class="a" style="left:291px;top:653px;width:61px;height:19px;border-top:1px solid #696969;border-left:1px solid #696969;border-right:1px solid #e3e3e3;border-bottom:1px solid #e3e3e3;box-sizing:border-box;"></div>
<div class="t" style="left:294px;top:657px;font-size:11px;line-height:11px;color:#6d6d6d;transform:scaleX(1.04);">0.05</div>
<div class="t" style="left:372px;top:630px;font-size:12px;line-height:12px;color:#000;transform:scaleX(0.87);">Td (ns)</div>
<div class="t" style="left:372px;top:657px;font-size:12px;line-height:12px;color:#000;transform:scaleX(0.82);">PER (ns)</div>
<div class="a" style="left:431px;top:626px;width:63px;height:21px;background:#f0f0f0;border-top:1px solid #a0a0a0;border-left:1px solid #a0a0a0;border-right:1px solid #fff;border-bottom:1px solid #fff;box-sizing:border-box;"></div>
<div class="a" style="left:432px;top:627px;width:61px;height:19px;border-top:1px solid #696969;border-left:1px solid #696969;border-right:1px solid #e3e3e3;border-bottom:1px solid #e3e3e3;box-sizing:border-box;"></div>
<div class="t" style="left:435px;top:631px;font-size:11px;line-height:11px;color:#6d6d6d;transform:scaleX(0.97);">0</div>
<div class="a" style="left:431px;top:653px;width:63px;height:20px;background:#f0f0f0;border-top:1px solid #a0a0a0;border-left:1px solid #a0a0a0;border-right:1px solid #fff;border-bottom:1px solid #fff;box-sizing:border-box;"></div>
<div class="a" style="left:432px;top:654px;width:61px;height:18px;border-top:1px solid #696969;border-left:1px solid #696969;border-right:1px solid #e3e3e3;border-bottom:1px solid #e3e3e3;box-sizing:border-box;"></div>
<div class="t" style="left:435px;top:658px;font-size:11px;line-height:11px;color:#6d6d6d;transform:scaleX(0.97);">10</div>
<div class="t" style="left:518px;top:630px;font-size:12px;line-height:12px;color:#000;transform:scaleX(0.9);">Output Impedance (ohm)</div>
<div class="t" style="left:519px;top:656px;font-size:12px;line-height:12px;color:#000;transform:scaleX(0.887);">Termination (ohm)</div>
<div class="a" style="left:740px;top:626px;width:77px;height:21px;background:#f0f0f0;border-top:1px solid #a0a0a0;border-left:1px solid #a0a0a0;border-right:1px solid #fff;border-bottom:1px solid #fff;box-sizing:border-box;"></div>
<div class="a" style="left:741px;top:627px;width:75px;height:19px;border-top:1px solid #696969;border-left:1px solid #696969;border-right:1px solid #e3e3e3;border-bottom:1px solid #e3e3e3;box-sizing:border-box;"></div>
<div class="t" style="left:744px;top:631px;font-size:11px;line-height:11px;color:#6d6d6d;transform:scaleX(0.97);">50</div>
<div class="a" style="left:740px;top:653px;width:77px;height:20px;background:#f0f0f0;border-top:1px solid #a0a0a0;border-left:1px solid #a0a0a0;border-right:1px solid #fff;border-bottom:1px solid #fff;box-sizing:border-box;"></div>
<div class="a" style="left:741px;top:654px;width:75px;height:18px;border-top:1px solid #696969;border-left:1px solid #696969;border-right:1px solid #e3e3e3;border-bottom:1px solid #e3e3e3;box-sizing:border-box;"></div>
<div class="t" style="left:744px;top:658px;font-size:11px;line-height:11px;color:#6d6d6d;transform:scaleX(0.97);">50</div>
<div class="a" style="left:209px;top:689px;width:158px;height:23px;background:#f0f0f0;border-top:1px solid #fff;border-left:1px solid #fff;border-right:1px solid #696969;border-bottom:1px solid #696969;box-sizing:border-box;"></div>
<div class="a" style="left:210px;top:690px;width:156px;height:21px;border-top:1px solid #e3e3e3;border-left:1px solid #e3e3e3;border-right:1px solid #a0a0a0;border-bottom:1px solid #a0a0a0;box-sizing:border-box;"></div>
<div class="t" style="left:-12.0px;width:600px;text-align:center;top:695px;font-size:11px;line-height:11px;color:#8c8c8c;transform:scaleX(0.946);transform-origin:50% 0;text-shadow:1px 1px 0 #fff;">Analyze</div>
<div class="a" style="left:368px;top:689px;width:93px;height:23px;background:#f0f0f0;border-top:1px solid #fff;border-left:1px solid #fff;border-right:1px solid #696969;border-bottom:1px solid #696969;box-sizing:border-box;"></div>
<div class="a" style="left:369px;top:690px;width:91px;height:21px;border-top:1px solid #e3e3e3;border-left:1px solid #e3e3e3;border-right:1px solid #a0a0a0;border-bottom:1px solid #a0a0a0;box-sizing:border-box;"></div>
<div class="t" style="left:114.5px;width:600px;text-align:center;top:695px;font-size:11px;line-height:11px;color:#8c8c8c;transform:scaleX(0.947);transform-origin:50% 0;text-shadow:1px 1px 0 #fff;">Display Result</div>
<div class="a" style="left:462px;top:689px;width:123px;height:23px;background:#f0f0f0;border-top:1px solid #fff;border-left:1px solid #fff;border-right:1px solid #696969;border-bottom:1px solid #696969;box-sizing:border-box;"></div>
<div class="a" style="left:463px;top:690px;width:121px;height:21px;border-top:1px solid #e3e3e3;border-left:1px solid #e3e3e3;border-right:1px solid #a0a0a0;border-bottom:1px solid #a0a0a0;box-sizing:border-box;"></div>
<div class="t" style="left:223.5px;width:600px;text-align:center;top:695px;font-size:11px;line-height:11px;color:#8c8c8c;transform:scaleX(0.98);transform-origin:50% 0;text-shadow:1px 1px 0 #fff;">Analyze Net Topology</div>
<div class="a" style="left:587px;top:689px;width:77px;height:23px;background:#f0f0f0;border-top:1px solid #fff;border-left:1px solid #fff;border-right:1px solid #696969;border-bottom:1px solid #696969;box-sizing:border-box;"></div>
<div class="a" style="left:588px;top:690px;width:75px;height:21px;border-top:1px solid #e3e3e3;border-left:1px solid #e3e3e3;border-right:1px solid #a0a0a0;border-bottom:1px solid #a0a0a0;box-sizing:border-box;"></div>
<div class="t" style="left:325.5px;width:600px;text-align:center;top:695px;font-size:11px;line-height:11px;color:#8c8c8c;transform:scaleX(0.944);transform-origin:50% 0;text-shadow:1px 1px 0 #fff;">Save</div>
<div class="a" style="left:665px;top:689px;width:78px;height:23px;background:#f0f0f0;border-top:1px solid #fff;border-left:1px solid #fff;border-right:1px solid #696969;border-bottom:1px solid #696969;box-sizing:border-box;"></div>
<div class="a" style="left:666px;top:690px;width:76px;height:21px;border-top:1px solid #e3e3e3;border-left:1px solid #e3e3e3;border-right:1px solid #a0a0a0;border-bottom:1px solid #a0a0a0;box-sizing:border-box;"></div>
<div class="t" style="left:404.0px;width:600px;text-align:center;top:695px;font-size:11px;line-height:11px;color:#000;transform:scaleX(0.965);transform-origin:50% 0;">Save As</div>
<div class="a" style="left:744px;top:689px;width:86px;height:23px;background:#f0f0f0;border-top:1px solid #fff;border-left:1px solid #fff;border-right:1px solid #696969;border-bottom:1px solid #696969;box-sizing:border-box;"></div>
<div class="a" style="left:745px;top:690px;width:84px;height:21px;border-top:1px solid #e3e3e3;border-left:1px solid #e3e3e3;border-right:1px solid #a0a0a0;border-bottom:1px solid #a0a0a0;box-sizing:border-box;"></div>
<div class="t" style="left:487.0px;width:600px;text-align:center;top:695px;font-size:11px;line-height:11px;color:#000;transform:scaleX(0.893);transform-origin:50% 0;">Close</div>
</body></html>
